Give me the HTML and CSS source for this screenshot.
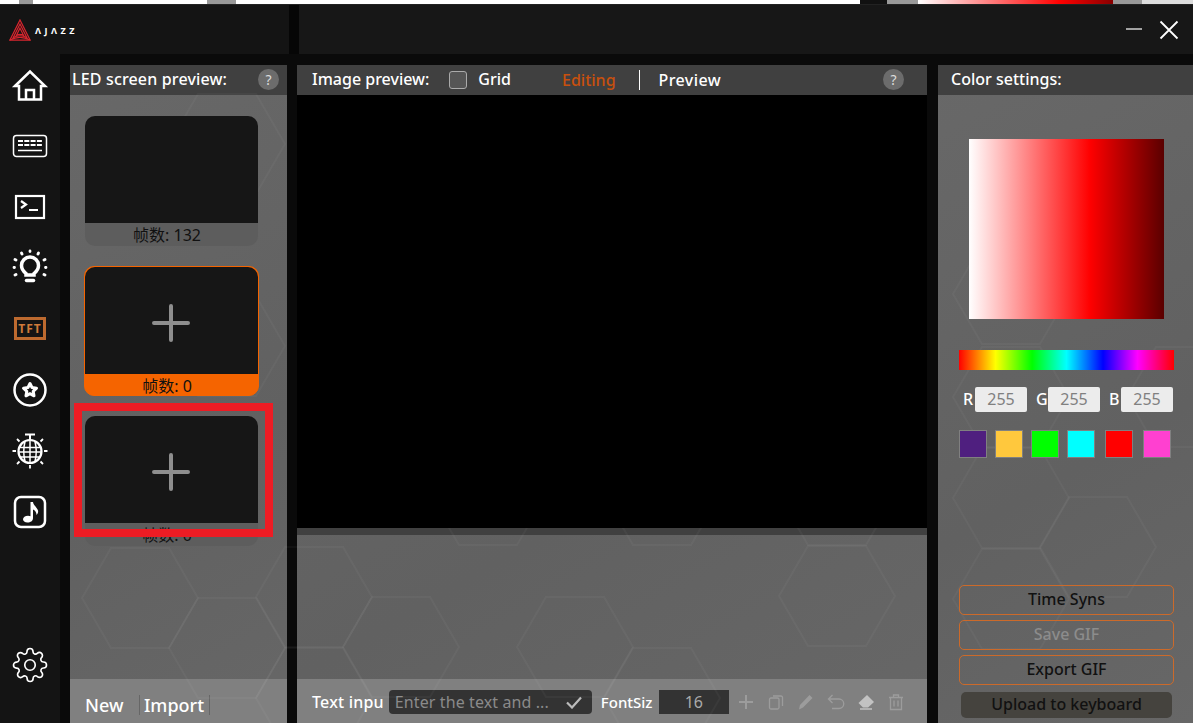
FILE: index.html
```html
<!DOCTYPE html>
<html lang="en">
<head>
    <meta charset="UTF-8">
    <meta name="viewport" content="width=device-width, initial-scale=1.0">
    <title>AJAZZ TFT editor</title>
    <link rel="stylesheet" href="styles.css">
</head>
<body>
    <div class="app">
        <div class="top-strip"></div>

        <!-- Title bar -->
        <div class="titlebar">
            <div class="titlebar-left">
                <svg class="logo-mark" viewBox="0 0 24 24" fill="none" stroke="#d8262f" stroke-width="1.300">
                    <path d="M12 1 L23 23 H1 Z"/>
                    <path d="M12 5.500 L19.500 20.500 Q12 16 4.500 20.500 Z"/>
                    <path d="M12 10 L16 18 Q12 15.500 8 18 Z"/>
                    <path d="M1 23 Q12 17 23 23"/>
                </svg>
                <span class="logo-text">&#923;J&#923;ZZ</span>
            </div>
            <div class="titlebar-gap"></div>
            <div class="titlebar-right">
                <svg class="win-btn" width="18" height="18" viewBox="0 0 18 18" stroke="#fff" stroke-width="1.200"><path d="M1 9 H17"/></svg>
                <svg class="win-btn" width="20" height="20" viewBox="0 0 20 20" stroke="#fff" stroke-width="1.800"><path d="M1.500 1.500 L18.500 18.500 M18.500 1.500 L1.500 18.500"/></svg>
            </div>
        </div>

        <div class="body">
            <!-- Sidebar -->
            <div class="sidebar">
                <div class="nav-item nav-home">
                    <svg viewBox="0 0 40 40" fill="none" stroke="#fff" stroke-width="2.500"><path d="M5 20 L20 5.500 L35 20 H31 V33.500 H9 V20 Z M16 33.500 V24 H24 V33.500"/></svg>
                </div>
                <div class="nav-item">
                    <svg viewBox="0 0 40 40" fill="none" stroke="#fff"><rect x="3.500" y="9.500" width="33" height="21" rx="3" stroke-width="1.500"/><path d="M8 15 H32 M8 19 H32" stroke-width="2" stroke-dasharray="5 1.300"/><path d="M8 24.500 H32" stroke-width="1.500"/></svg>
                </div>
                <div class="nav-item">
                    <svg viewBox="0 0 40 40" fill="none" stroke="#fff" stroke-width="2.200"><rect x="6" y="9" width="28" height="22"/><path d="M11 14 L16 17.500 L11 21 M19 23 H28"/></svg>
                </div>
                <div class="nav-item">
                    <svg viewBox="0 0 40 40" fill="none" stroke="#fff"><path d="M16 27 V25.500 C13.500 23.500 11.500 21 11.500 17.500 A8.500 8.500 0 0 1 28.500 17.500 C28.500 21 26.500 23.500 24 25.500 V27 Z" stroke-width="3.500"/><path d="M16.500 32.500 H23.500" stroke-width="3.500" stroke-linecap="round"/><path d="M20 3 V3.500 M11.500 5 L12 6 M28.500 5 L28 6 M5 11.500 L6 12 M35 11.500 L34 12 M4 19.500 H4.500 M36 19.500 H35.500 M5 27 L6 26.500 M35 27 L34 26.500" stroke-width="2.800" stroke-linecap="round"/></svg>
                </div>
                <div class="nav-item">
                    <div class="tft-badge">TFT</div>
                </div>
                <div class="nav-item">
                    <svg viewBox="0 0 40 40" fill="none" stroke="#fff" stroke-linejoin="round"><circle cx="20" cy="20" r="15.500" stroke-width="2.500"/><path d="M20 13.500 L22 17.500 L26.500 18.200 L23.200 21.300 L24 25.800 L20 23.700 L16 25.800 L16.800 21.300 L13.500 18.200 L18 17.500 Z" stroke-width="3"/></svg>
                </div>
                <div class="nav-item">
                    <svg viewBox="0 0 40 40" fill="none" stroke="#fff"><circle cx="20" cy="20.500" r="11.500" stroke-width="2.200"/><path d="M15 3.500 H25 M20 3.500 V9.500" stroke-width="2"/><path d="M9.500 16.500 H30.500 M9 21 H31 M10.500 26 H29.500 M20 9.500 V31.500" stroke-width="1.500"/><path d="M15 10.500 Q12.500 20.500 15 30.500 M25 10.500 Q27.500 20.500 25 30.500" stroke-width="1.500"/><path d="M2.500 20 H6 M34 20 H37.500 M20 34 V37.500 M7 8 L9.500 10.500 M33 8 L30.500 10.500 M7 33 L9.500 30.500 M33 33 L30.500 30.500" stroke-width="1.800"/></svg>
                </div>
                <div class="nav-item">
                    <svg viewBox="0 0 40 40" fill="none"><rect x="5" y="5" width="30" height="30" rx="6" stroke="#fff" stroke-width="2.500"/><path d="M20.500 10 H23 C23.500 13.500 27 15 28 18.500 C28.500 20.500 27.500 22 26.500 23 C26.500 20 25 18.500 23 17.500 V26 C23 29 20.500 30.500 17.500 30.500 C14.800 30.500 13 29.200 13 27.300 C13 25.200 15.200 23.700 18 23.700 C19 23.700 19.900 23.900 20.500 24.200 Z" fill="#fff"/></svg>
                </div>
                <div class="nav-item nav-settings">
                    <svg class="gear" viewBox="0 0 24 24" fill="none" stroke="#fff" stroke-width="1.100">
                        <circle cx="12" cy="12" r="3.500"/>
                        <path d="M19.4 15a1.65 1.65 0 0 0 .33 1.82l.06.06a2 2 0 0 1 0 2.83 2 2 0 0 1-2.83 0l-.06-.06a1.65 1.65 0 0 0-1.82-.33 1.65 1.65 0 0 0-1 1.51V21a2 2 0 0 1-2 2 2 2 0 0 1-2-2v-.09A1.65 1.65 0 0 0 9 19.4a1.65 1.65 0 0 0-1.82.33l-.06.06a2 2 0 0 1-2.83 0 2 2 0 0 1 0-2.83l.06-.06a1.65 1.65 0 0 0 .33-1.82 1.65 1.65 0 0 0-1.51-1H3a2 2 0 0 1-2-2 2 2 0 0 1 2-2h.09A1.65 1.65 0 0 0 4.6 9a1.65 1.65 0 0 0-.33-1.82l-.06-.06a2 2 0 0 1 0-2.83 2 2 0 0 1 2.83 0l.06.06a1.65 1.65 0 0 0 1.82.33H9a1.65 1.65 0 0 0 1-1.51V3a2 2 0 0 1 2-2 2 2 0 0 1 2 2v.09a1.65 1.65 0 0 0 1 1.51 1.65 1.65 0 0 0 1.82-.33l.06-.06a2 2 0 0 1 2.83 0 2 2 0 0 1 0 2.83l-.06.06a1.65 1.65 0 0 0-.33 1.82V9a1.65 1.65 0 0 0 1.51 1H21a2 2 0 0 1 2 2 2 2 0 0 1-2 2h-.09a1.65 1.65 0 0 0-1.51 1z"/>
                    </svg>
                </div>
            </div>

            <div class="workspace">
                <!-- Background hexagons, page coordinates -->
                <svg class="hexes" viewBox="60 54 1133 669" fill="none" stroke="#fff" stroke-opacity="0.035" stroke-width="2">
                    <defs><polygon id="hex" points="-58,0 -29,-50 29,-50 58,0 29,50 -29,50"/></defs>
                    <use href="#hex" x="227" y="144"/>
                    <use href="#hex" x="227" y="346"/>
                    <use href="#hex" x="140" y="598"/>
                    <use href="#hex" x="227" y="648"/>
                    <use href="#hex" x="314" y="597"/>
                    <use href="#hex" x="314" y="698"/>
                    <use href="#hex" x="401" y="647"/>
                    <use href="#hex" x="488" y="495"/>
                    <use href="#hex" x="575" y="647"/>
                    <use href="#hex" x="662" y="495"/>
                    <use href="#hex" x="662" y="698"/>
                    <use href="#hex" x="837" y="495"/>
                    <use href="#hex" x="837" y="596"/>
                    <use href="#hex" x="1011" y="294"/>
                    <use href="#hex" x="1011" y="397"/>
                    <use href="#hex" x="1011" y="498"/>
                    <use href="#hex" x="1011" y="599"/>
                    <use href="#hex" x="1098" y="547"/>
                    <use href="#hex" x="1185" y="397"/>
                </svg>

                <!-- LED screen preview -->
                <div class="panel panel-led">
                    <div class="panel-head">
                        <span class="head-title head-title-led">LED screen preview:</span>
                        <span class="help">?</span>
                    </div>
                    <div class="frame-list">
                        <div class="frame">
                            <div class="frame-screen"></div>
                            <div class="frame-count">帧数: 132</div>
                        </div>
                        <div class="frame frame-active">
                            <div class="frame-screen">
                                <svg class="plus" viewBox="0 0 38 38" stroke="#8e8e8e" stroke-width="4" stroke-linecap="round"><path d="M2 19 H36 M19 2 V36"/></svg>
                            </div>
                            <div class="frame-count">帧数: 0</div>
                        </div>
                        <div class="frame">
                            <div class="frame-screen">
                                <svg class="plus" viewBox="0 0 38 38" stroke="#8e8e8e" stroke-width="4" stroke-linecap="round"><path d="M2 19 H36 M19 2 V36"/></svg>
                            </div>
                            <div class="frame-count">帧数: 0</div>
                            <div class="red-mark"></div>
                        </div>
                    </div>
                    <div class="panel-foot foot-led">
                        <span class="foot-link link-new">New</span>
                        <span class="foot-link link-import">Import</span>
                    </div>
                </div>

                <!-- Image preview -->
                <div class="panel panel-image">
                    <div class="panel-head">
                        <span class="head-title">Image preview:</span>
                        <span class="checkbox"></span>
                        <span class="head-title">Grid</span>
                        <span class="tab tab-editing">Editing</span>
                        <span class="tab tab-preview">Preview</span>
                        <span class="help">?</span>
                    </div>
                    <div class="canvas"></div>
                    <div class="canvas-edge"></div>
                    <div class="image-spacer"></div>
                    <div class="panel-foot foot-image">
                        <span class="foot-label">Text inpu</span>
                        <div class="text-input">
                            <span class="placeholder">Enter the text and ...</span>
                            <svg width="16" height="13" viewBox="0 0 16 13" fill="none" stroke="#bbb" stroke-width="2.200"><path d="M1 6.500 L6 11.500 L15 1.500"/></svg>
                        </div>
                        <span class="foot-label label-font">FontSiz</span>
                        <div class="font-box">16</div>
                        <div class="tools">
                            <svg viewBox="0 0 18 18" fill="none" stroke="#9c9c9c" stroke-width="2"><path d="M2 9 H16 M9 2 V16"/></svg>
                            <svg viewBox="0 0 18 18" fill="none" stroke="#9c9c9c" stroke-width="1.300"><rect x="2.500" y="5" width="9.500" height="11" rx="1.500"/><path d="M6 3 H14 A1.500 1.500 0 0 1 15.500 4.500 V13"/></svg>
                            <svg viewBox="0 0 18 18" fill="#9c9c9c"><path d="M2 16.500 L3 12 L12.500 2 L15.500 5 L6 14.500 Z"/></svg>
                            <svg viewBox="0 0 18 18" fill="none" stroke="#9c9c9c" stroke-width="1.300"><path d="M5.500 2 L1.500 6 L5.500 10 M1.500 6 H12 A4.500 4.500 0 0 1 12 15.500 H5"/></svg>
                            <svg viewBox="0 0 18 18" fill="#c2c2c2"><path d="M10 2 L17 9 L11 14.500 H6 L1.500 10 Z"/><path d="M3 16 H15" stroke="#c2c2c2" stroke-width="1.500"/></svg>
                            <svg viewBox="0 0 18 18" fill="none" stroke="#9c9c9c" stroke-width="1.300"><path d="M2 4.500 H16 M6.500 4.500 V2 H11.500 V4.500 M3.500 4.500 V16.500 H14.500 V4.500 M7 7.500 V13.500 M11 7.500 V13.500"/></svg>
                        </div>
                    </div>
                </div>

                <!-- Color settings -->
                <div class="panel panel-color">
                    <div class="panel-head">
                        <span class="head-title head-title-color">Color settings:</span>
                    </div>
                    <div class="color-body">
                        <div class="picker"></div>
                        <div class="hue-bar"></div>
                        <div class="rgb-row">
                            <span class="rgb-label">R</span><span class="rgb-input">255</span>
                            <span class="rgb-label">G</span><span class="rgb-input">255</span>
                            <span class="rgb-label">B</span><span class="rgb-input">255</span>
                        </div>
                        <div class="swatches">
                            <span class="swatch swatch-purple"></span>
                            <span class="swatch swatch-yellow"></span>
                            <span class="swatch swatch-green"></span>
                            <span class="swatch swatch-cyan"></span>
                            <span class="swatch swatch-red"></span>
                            <span class="swatch swatch-pink"></span>
                        </div>
                        <div class="actions">
                            <button class="action">Time Syns</button>
                            <button class="action action-disabled">Save GIF</button>
                            <button class="action">Export GIF</button>
                            <button class="upload">Upload to keyboard</button>
                        </div>
                    </div>
                </div>
            </div>
        </div>
    </div>
</body>
</html>
```

FILE: styles.css
```css
/* Global styles */
* {
    box-sizing: border-box;
}
body {
    margin: 0;
    font-family: "Noto Sans", "Noto Sans CJK SC", sans-serif;
    font-size: 16px;
    font-weight: 500;
    background: #141414;
    color: #fff;
    overflow: hidden;
}
.app {
    width: 1193px;
    height: 723px;
    display: flex;
    flex-direction: column;
}

/* Top strip */
.top-strip {
    height: 5px;
    flex: none;
    border-bottom: 1px solid #222;
    background: linear-gradient(90deg,
        #fff 19px, #999 19px, #999 33px, #fff 33px, #fff 207px, #999 207px, #999 236px,
        #fff 236px, #fff 860px, #111 860px, #111 887px, #999 887px, #999 918px,
        #fff 918px, #f00 1060px, #800 1113px, #999 1113px, #999 1142px, #ddd 1142px);
}

/* Title bar */
.titlebar {
    height: 49px;
    flex: none;
    display: flex;
}
.titlebar-left {
    width: 289px;
    display: flex;
    align-items: center;
    padding: 0 0 0 9px;
    background: #141414;
}
.logo-mark {
    width: 22px;
    height: 22px;
}
.logo-text {
    margin-left: 4px;
    padding-top: 2px;
    font-size: 9px;
    font-weight: 700;
    letter-spacing: 3.500px;
    color: #fff;
}
.titlebar-gap {
    width: 10px;
    background: #060606;
}
.titlebar-right {
    flex: 1;
    display: flex;
    align-items: center;
    justify-content: flex-end;
    gap: 16px;
    padding: 1px 14px 0 0;
    background: #171717;
}
.win-btn:first-child {
    margin-top: -2px;
}

/* Main area */
.body {
    flex: 1;
    display: flex;
    min-height: 0;
}
.sidebar {
    width: 60px;
    flex: none;
    display: flex;
    flex-direction: column;
    padding: 2px 0 28px;
    background: #141414;
}
.nav-item {
    height: 61px;
    flex: none;
    display: flex;
    align-items: center;
    justify-content: center;
}
.nav-item svg {
    width: 40px;
    height: 40px;
}
.nav-home {
    height: 59px;
}
.nav-settings {
    margin-top: auto;
}
.nav-item .gear {
    width: 36px;
    height: 36px;
}
.tft-badge {
    width: 32px;
    height: 23px;
    border: 3px solid #bd6a2f;
    color: #cf7a3a;
    font-size: 12px;
    font-weight: 700;
    letter-spacing: 1px;
    line-height: 17px;
    text-align: center;
}

.workspace {
    position: relative;
    flex: 1;
    display: flex;
    gap: 10px;
    padding: 11px 0 0 10px;
    background: #0a0a0a;
}
.hexes {
    position: absolute;
    top: 0;
    left: 0;
    width: 1133px;
    height: 669px;
    z-index: 1;
    pointer-events: none;
}

/* Panels */
.panel {
    display: flex;
    flex-direction: column;
    background: linear-gradient(150deg, #686868, #616161 60%, #676767);
}
.panel-led {
    width: 217px;
}
.panel-image {
    width: 630px;
}
.panel-color {
    width: 255px;
    margin-left: 1px;
}
.panel-head {
    height: 30px;
    flex: none;
    display: flex;
    align-items: center;
    padding: 0 0 2px 15px;
    background: #404040;
    line-height: 28px;
}
.head-title-led {
    margin-left: -13px;
    letter-spacing: 0.160px;
}
.head-title-color {
    margin-left: -2px;
}
.help {
    width: 21px;
    height: 21px;
    margin-left: auto;
    margin-right: 8px;
    border-radius: 50%;
    background: #6c6c6c;
    color: #ddd;
    font-size: 14px;
    font-weight: 400;
    line-height: 21px;
    text-align: center;
}
.panel-image .help {
    margin-right: 23px;
}
.checkbox {
    width: 18px;
    height: 18px;
    margin: 2px 11px 0 20px;
    border: 1px solid #aaa;
    border-radius: 3px;
    background: #555;
}
.tab {
    margin-top: 2px;
}
.tab-editing {
    margin-left: 51px;
    padding-right: 23px;
    border-right: 1px solid #fff;
    line-height: 20px;
    color: #c8500e;
}
.tab-preview {
    margin-left: 19px;
    letter-spacing: 0.400px;
}

/* Frame list */
.frame-list {
    flex: 1;
    display: flex;
    flex-direction: column;
    gap: 20px;
    padding: 21px 0 0 15px;
}
.frame {
    position: relative;
    width: 173px;
    height: 130px;
    display: flex;
    flex-direction: column;
    border-radius: 10px;
    background: #5d5d5d;
    z-index: 2;
}
.frame-screen {
    height: 107px;
    flex: none;
    display: flex;
    align-items: center;
    justify-content: center;
    border-radius: 10px 10px 0 0;
    background: #161616;
}
.plus {
    width: 38px;
    height: 38px;
    margin: 4px 1px 0 0;
}
.frame-count {
    flex: 1;
    padding-right: 9px;
    color: #111;
    font-size: 16px;
    font-weight: 400;
    line-height: 24px;
    text-align: center;
}
.frame-active {
    width: 175px;
    margin-left: -1px;
    border: 1px solid #f56400;
    background: #f56400;
}
.red-mark {
    position: absolute;
    top: -13px;
    left: -11px;
    width: 199px;
    height: 134px;
    border: 8px solid #ed1c24;
}

/* Image preview */
.canvas {
    height: 433px;
    flex: none;
    position: relative;
    z-index: 2;
    background: #000;
}
.canvas-edge {
    height: 7px;
    flex: none;
    background: #404040;
}
.image-spacer {
    flex: 1;
}

/* Footers */
.panel-foot {
    height: 44px;
    flex: none;
    display: flex;
    align-items: center;
    background: #808080;
}
.foot-led {
    padding: 8px 0 0 15px;
    font-size: 18px;
}
.foot-link {
    height: 20px;
    display: flex;
    align-items: center;
    border-right: 1px solid #666;
}
.link-new {
    width: 55px;
}
.link-import {
    padding: 0 5px 0 4px;
}
.foot-image {
    padding: 2px 0 0 15px;
}
.foot-label {
    letter-spacing: 0.200px;
    white-space: nowrap;
}
.text-input {
    width: 203px;
    height: 24px;
    margin-left: 5px;
    display: flex;
    align-items: center;
    justify-content: space-between;
    padding: 0 10px 0 6px;
    border-radius: 4px;
    background: #333;
}
.placeholder {
    color: #8a8a8a;
    font-weight: 400;
    letter-spacing: 0.100px;
}
.label-font {
    width: 58px;
    margin-left: 9px;
    font-size: 15px;
    letter-spacing: 0;
}
.font-box {
    width: 70px;
    height: 24px;
    background: #333;
    color: #aaa;
    font-weight: 400;
    line-height: 24px;
    text-align: center;
}
.tools {
    display: flex;
    gap: 12px;
    margin-left: 8px;
}
.tools svg {
    width: 18px;
    height: 18px;
}

/* Color settings */
.color-body {
    flex: 1;
    display: flex;
    flex-direction: column;
    padding: 44px 19px 0 21px;
}
.color-body > * {
    position: relative;
    z-index: 2;
}
.picker {
    width: 195px;
    height: 180px;
    flex: none;
    margin-left: 10px;
    background: linear-gradient(90deg, #fff, #f00 62%, #5a0000);
}
.hue-bar {
    width: 215px;
    height: 20px;
    flex: none;
    margin-top: 31px;
    background: linear-gradient(90deg, #f00, #ff0 17%, #0f0 34%, #0ff 50%, #00f 67%, #f0f 83%, #f00);
}
.rgb-row {
    display: flex;
    align-items: center;
    margin-top: 17px;
    height: 25px;
}
.rgb-label {
    width: 16px;
    flex: none;
    padding-left: 4px;
    line-height: 25px;
}
.rgb-input {
    width: 52px;
    height: 25px;
    flex: none;
    margin-right: 5px;
    border-radius: 2px;
    background: #ececec;
    color: #808080;
    font-weight: 400;
    line-height: 25px;
    text-align: center;
}
.swatches {
    display: flex;
    gap: 8px;
    margin-top: 18px;
}
.swatch {
    width: 28px;
    height: 28px;
    border: 1px solid #808080;
}
.swatch:nth-child(n+5) {
    margin-left: 2px;
}
.swatch-purple { background: #4f1f7f; }
.swatch-yellow { background: #ffc83d; }
.swatch-green { background: #0f0; }
.swatch-cyan { background: #0ff; }
.swatch-red { background: #f00; }
.swatch-pink { background: #ff40d0; }

.actions {
    display: flex;
    flex-direction: column;
    gap: 5px;
    margin-top: 127px;
}
.action {
    width: 215px;
    height: 30px;
    padding: 0 0 2px;
    border: 1px solid #cc6a2a;
    border-radius: 5px;
    background: transparent;
    color: #111;
    font: inherit;
}
.action-disabled {
    color: #8c8c8c;
}
.upload {
    width: 211px;
    height: 26px;
    margin: 2px 0 0 2px;
    padding: 0 0 2px;
    border: none;
    border-radius: 5px;
    background: #45433e;
    color: #111;
    font: inherit;
}
```
